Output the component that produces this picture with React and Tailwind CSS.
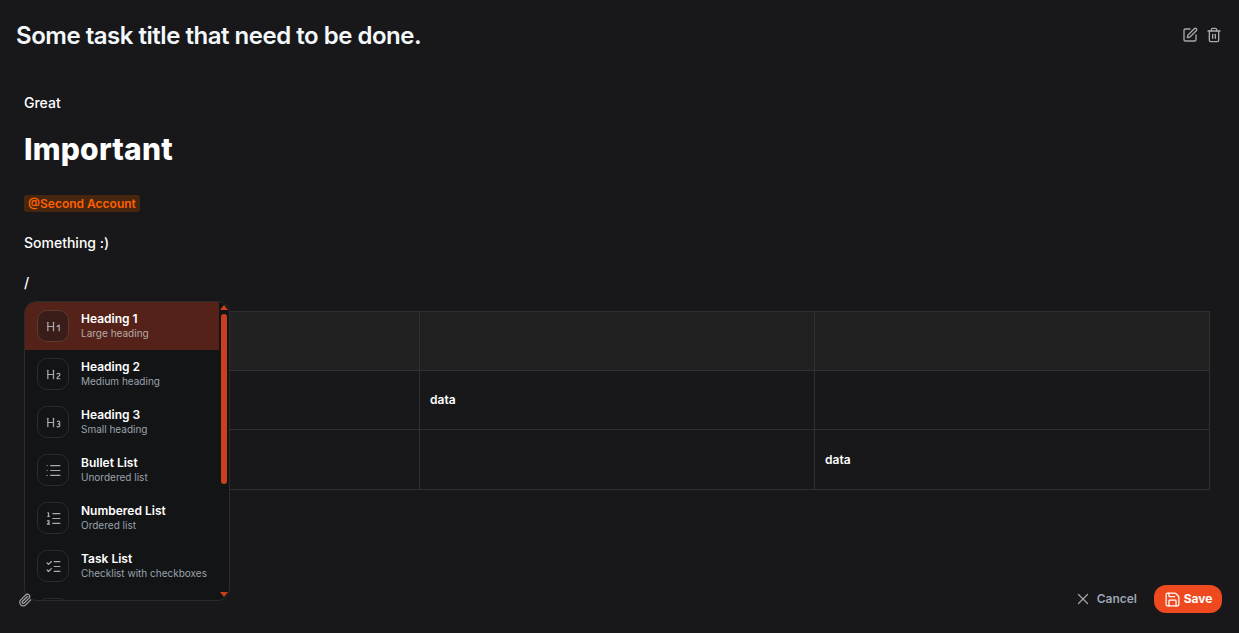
import React from "react";
import {
  Heading1,
  Heading2,
  Heading3,
  List,
  ListOrdered,
  ListChecks,
  TextQuote,
  SquarePen,
  Trash2,
  Paperclip,
  X,
  Save,
} from "lucide-react";

// last row is cut off by the menu edge, only the top of its icon shows
const COMMANDS = [
  { title: "Heading 1", hint: "Large heading", Icon: Heading1, active: true },
  { title: "Heading 2", hint: "Medium heading", Icon: Heading2 },
  { title: "Heading 3", hint: "Small heading", Icon: Heading3 },
  { title: "Bullet List", hint: "Unordered list", Icon: List },
  { title: "Numbered List", hint: "Ordered list", Icon: ListOrdered },
  { title: "Task List", hint: "Checklist with checkboxes", Icon: ListChecks },
  { Icon: TextQuote },
];

function CommandItem({ title, hint, Icon, active }) {
  return (
    <div
      className={`flex h-12 shrink-0 items-center gap-3 pl-3 ${
        active ? "bg-[#55221a]" : ""
      }`}
    >
      <div
        className={`flex h-8 w-8 shrink-0 items-center justify-center rounded-[10px] border ${
          active ? "border-[#5f3a32] bg-[#3a1c18]" : "border-[#2a2b2e] bg-[#131416]"
        }`}
      >
        <Icon className="h-[17px] w-[17px] text-[#a8a8ad]" strokeWidth={1.75} />
      </div>
      {title && (
        <div className="mb-0.5 min-w-0">
          <div className="text-xs leading-[15px] font-semibold text-white">{title}</div>
          <div
            className={`text-[10px] leading-[14px] ${
              active ? "text-[#b5aaa6]" : "text-[#9aa3ad]"
            }`}
          >
            {hint}
          </div>
        </div>
      )}
    </div>
  );
}

function SlashMenu() {
  return (
    <div className="absolute top-[231px] left-6 z-10 flex h-[300px] w-[206px] overflow-hidden rounded-xl border border-[#2a2b2e] bg-[#131416]">
      <div className="flex min-w-0 flex-1 flex-col overflow-hidden">
        {COMMANDS.map((cmd, i) => (
          <CommandItem key={i} {...cmd} />
        ))}
      </div>
      {/* Scrollbar */}
      <div className="flex w-[10px] shrink-0 flex-col items-center pt-[3px] pb-[3px]">
        <div className="h-0 w-0 border-x-4 border-b-[5px] border-x-transparent border-b-[#c9401f]" />
        <div className="mt-1 h-[170px] w-[6px] rounded-full bg-[#c9401f]" />
        <div className="flex-1" />
        <div className="h-0 w-0 border-x-4 border-t-[5px] border-x-transparent border-t-[#c9401f]" />
      </div>
    </div>
  );
}

function DataTable() {
  return (
    <table className="w-full table-fixed border-collapse">
      <tbody>
        <tr className="h-[59px] bg-[#212121]">
          <td className="border border-[#303032]" />
          <td className="border border-[#303032]" />
          <td className="border border-[#303032]" />
        </tr>
        <tr className="h-[59px] text-xs font-semibold text-white">
          <td className="border border-[#303032] px-[10px]" />
          <td className="border border-[#303032] px-[10px]">data</td>
          <td className="border border-[#303032] px-[10px]" />
        </tr>
        <tr className="h-[60px] text-xs font-semibold text-white">
          <td className="border border-[#303032] px-[10px]" />
          <td className="border border-[#303032] px-[10px]" />
          <td className="border border-[#303032] px-[10px]">data</td>
        </tr>
      </tbody>
    </table>
  );
}

export default function App() {
  return (
    <div
      className="flex h-screen flex-col overflow-hidden bg-[#18181b] text-white"
      style={{ fontFamily: "Inter, sans-serif" }}
    >
      {/* Header */}
      <div className="flex h-[70px] shrink-0 items-center justify-between pr-[17px] pl-4">
        <h1 className="pt-0.5 text-2xl tracking-[-0.02em] font-semibold text-[#f4f8fb]">
          Some task title that need to be done.
        </h1>
        <div className="flex items-center gap-2 text-[#a8a8ad]">
          <SquarePen className="h-4 w-4" strokeWidth={2} />
          <Trash2 className="h-4 w-4" strokeWidth={2} />
        </div>
      </div>

      {/* Editor */}
      <div className="relative flex-1 px-6 pt-[23px] pr-[29px]">
        <p className="text-sm leading-5 font-medium">Great</p>
        <h2 className="mt-[18px] text-3xl leading-9 tracking-[0.2px] font-extrabold">Important</h2>
        <p className="mt-[26px] text-sm leading-5">
          <span className="rounded-[3px] bg-[#47260f] px-1 py-px text-xs font-semibold text-[#ff6000]">
            @Second Account
          </span>
        </p>
        <p className="mt-5 text-sm leading-5 font-medium">Something :)</p>
        <p className="mt-5 text-sm leading-5 font-medium">/</p>
        <div className="mt-[18px]">
          <DataTable />
        </div>
        <SlashMenu />
      </div>

      {/* Footer */}
      <div className="relative z-20 flex h-[48px] shrink-0 items-start justify-between pr-[17px] pl-[18px]">
        <div className="flex h-[30px] items-center">
          <Paperclip className="h-[14px] w-[14px] text-[#a8a8ad]" strokeWidth={2} />
        </div>
        <div className="flex items-center gap-[17px]">
          <button className="flex items-center gap-[5px] text-xs font-semibold text-[#9ca3af]">
            <X className="h-[18px] w-[18px]" strokeWidth={1.75} />
            Cancel
          </button>
          <button className="flex h-7 w-[68px] items-center justify-center gap-[3px] rounded-xl bg-[#ef4a1f] text-xs font-bold text-white">
            <Save className="h-[17px] w-[17px]" strokeWidth={1.75} />
            Save
          </button>
        </div>
      </div>
    </div>
  );
}
